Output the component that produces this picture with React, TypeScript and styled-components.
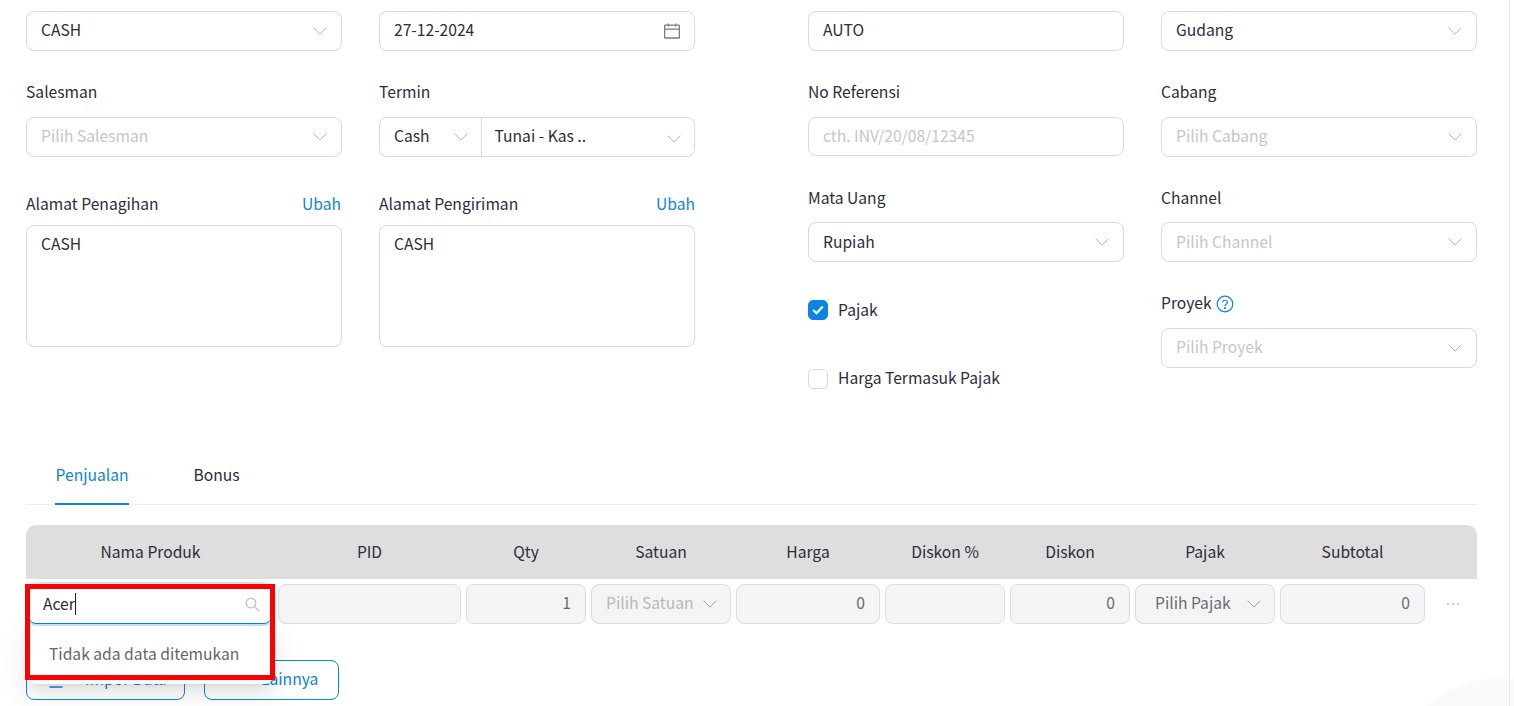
import React from "react";
import styled, { createGlobalStyle } from "styled-components";

const Global = createGlobalStyle`
  html, body { margin: 0; padding: 0; height: 706px; overflow: hidden; background: #fff; }
  body { font-family: "Noto Sans CJK SC", "Noto Sans", sans-serif; font-size: 15.65px; color: #2c2c3a; }
  * { box-sizing: border-box; }
`;

const Root = styled.div`
  position: relative;
  width: 1514px;
  height: 706px;
  overflow: hidden;
`;
const Page = styled.div`
  position: relative;
  width: 1510px;
  height: 706px;
  padding: 11px 32px 0 26px;
  border-right: 1px solid #e8e8e8;
`;
const Decor = styled.div`
  position: absolute;
  left: 1388px;
  top: 678px;
  width: 224px;
  height: 224px;
  border-radius: 50%;
  background: #fafafa;
`;
const FormArea = styled.div`
  display: flex;
  justify-content: space-between;
  height: 378px;
  position: relative;
`;
const Block = styled.div`
  display: flex;
  gap: 37px;
`;
const Column = styled.div`
  width: 316px;
  display: flex;
  flex-direction: column;
`;
const LabelRow = styled.div<{ $top: number; $bottom: number }>`
  display: flex;
  align-items: center;
  justify-content: space-between;
  height: 24px;
  line-height: 22px;
  margin-top: ${(p) => p.$top}px;
  margin-bottom: ${(p) => p.$bottom}px;
`;
const LabelGroup = styled.span`
  display: inline-flex;
  align-items: center;
  gap: 4px;
  svg { margin-top: 2px; }
`;
const LinkText = styled.a<{ $inset?: number }>`
  color: #0b84dd;
  margin-right: ${(p) => p.$inset ?? 0}px;
`;
const Control = styled.div<{ $muted?: boolean; $h?: number; $centered?: boolean }>`
  display: flex;
  align-items: center;
  justify-content: space-between;
  height: ${(p) => p.$h ?? 40}px;
  flex: none;
  padding: 0 14px ${(p) => (p.$centered ? 0 : 2)}px;
  background: #fff;
  border: 1px solid #d9d9d9;
  border-radius: 8px;
  color: ${(p) => (p.$muted ? "#c6c6c6" : "#2c2c3a")};
  line-height: 22px;
  svg { margin-top: ${(p) => (p.$centered ? 0 : 2)}px; }
`;
const TextArea = styled.div`
  height: 122px;
  padding: 6px 14px;
  border: 1px solid #d9d9d9;
  border-radius: 8px;
  line-height: 24px;
`;
const Split = styled.div`
  display: flex;
  height: 40px;
  border: 1px solid #d9d9d9;
  border-radius: 8px;
`;
const SplitPart = styled.div<{ $w?: number; $drop?: number }>`
  display: flex;
  align-items: center;
  justify-content: space-between;
  flex: ${(p) => (p.$w ? `0 0 ${p.$w}px` : "1")};
  padding: 0 13px 2px 14px;
  line-height: 22px;
  & + & { border-left: 1px solid #d9d9d9; padding-left: 12.5px; }
  svg { margin-top: ${(p) => p.$drop ?? 2}px; }
`;
const Check = styled.div<{ $top: number }>`
  display: flex;
  align-items: center;
  gap: 10px;
  margin-top: ${(p) => p.$top}px;
  height: 20px;
  line-height: 18px;
`;
const CheckText = styled.span<{ $lift: number }>`
  padding-bottom: ${(p) => p.$lift}px;
`;
const Box = styled.span<{ $on?: boolean }>`
  display: flex;
  align-items: center;
  justify-content: center;
  width: 20px;
  height: 20px;
  border-radius: 5px;
  border: 1px solid ${(p) => (p.$on ? "#0b84e3" : "#d9d9d9")};
  background: ${(p) => (p.$on ? "#0b84e3" : "#fff")};
`;
const Tabs = styled.div`
  display: flex;
  height: 59px;
  margin-top: 57px;
  padding-left: 29px;
  gap: 64px;
  border-bottom: 1px solid #ececec;
`;
const Tab = styled.div<{ $active?: boolean }>`
  height: 59px;
  line-height: 58px;
  padding: 0 0.5px;
  color: ${(p) => (p.$active ? "#0b84dd" : "#2c2c3a")};
  border-bottom: 2px solid ${(p) => (p.$active ? "#0b84e3" : "transparent")};
`;
const columns = "247px 183px 120px 140px 144px 120px 120px 140px 145px 1fr";
const HeaderRow = styled.div`
  display: grid;
  grid-template-columns: ${columns};
  column-gap: 5px;
  height: 54px;
  margin-top: 20px;
  align-items: center;
  background: #dedede;
  border-radius: 10px 10px 0 0;
`;
const HeaderCell = styled.div`
  text-align: center;
  line-height: 22px;
  &:first-child { padding-left: 2px; }
`;
const BodyRow = styled.div`
  display: grid;
  grid-template-columns: ${columns};
  column-gap: 5px;
  margin-top: 5px;
  height: 40px;
`;
const DisabledCell = styled.div<{ $right?: boolean; $muted?: boolean; $inset?: number }>`
  display: flex;
  align-items: center;
  justify-content: ${(p) => (p.$right ? "flex-end" : "space-between")};
  height: 40px;
  padding: 0 ${(p) => (p.$right ? 14 : 13)}px 2px ${(p) => p.$inset ?? 14}px;
  background: #f4f4f4;
  border: 1px solid #dcdcdc;
  border-radius: 8px;
  color: ${(p) => (p.$muted ? "#b8b8b8" : "#666c74")};
  line-height: 22px;
  svg { margin-top: 2px; }
`;
const ProductCell = styled.div`
  position: relative;
`;
const SearchBox = styled.div`
  position: absolute;
  left: 2px;
  right: 1px;
  top: 0;
  height: 40px;
  display: flex;
  align-items: center;
  justify-content: space-between;
  padding: 0 11px 0 14px;
  background: #fff;
  border: 1px solid #0b84e3;
  border-radius: 8px;
  box-shadow: 0 0 0 2px rgba(11, 132, 227, 0.2);
  line-height: 22px;
`;
const TypedText = styled.span`
  border-right: 1px solid #222;
  line-height: 22px;
  margin-right: auto;
`;
const Popup = styled.div`
  position: absolute;
  left: 2px;
  right: 1px;
  top: 42px;
  height: 58px;
  padding: 17px 21px 0;
  line-height: 22px;
  color: #666;
  background: #fff;
  border-radius: 8px;
  box-shadow: 0 6px 16px 0 rgba(0, 0, 0, 0.08), 0 3px 6px -4px rgba(0, 0, 0, 0.12), 0 9px 28px 8px rgba(0, 0, 0, 0.05);
  z-index: 2;
`;
const Highlight = styled.div`
  position: absolute;
  left: -1px;
  top: 0;
  width: 250px;
  height: 96px;
  border: 5px solid #ff0000;
  z-index: 3;
`;
const MoreCell = styled.div`
  display: flex;
  align-items: center;
  justify-content: center;
  padding-right: 2px;
  height: 40px;
`;
const Actions = styled.div`
  display: flex;
  gap: 19px;
  margin-top: 36px;
`;
const ActionButton = styled.div<{ $w: number; $pad: number; $gap: number }>`
  display: flex;
  align-items: center;
  gap: ${(p) => p.$gap}px;
  width: ${(p) => p.$w}px;
  height: 40px;
  padding: 0 0 2px ${(p) => p.$pad}px;
  border: 1px solid #0b84e3;
  border-radius: 8px;
  color: #0b84dd;
  line-height: 22px;
  white-space: nowrap;
  svg { flex: none; margin-top: 3px; }
`;

const Chevron = ({ color = "#b8b8b8" }: { color?: string }) => (
  <svg width="14" height="8" viewBox="0 0 14 8" fill="none">
    <path d="M0.7 0.6 L7 7.2 L13.3 0.6" stroke={color} strokeWidth="1" />
  </svg>
);
const Calendar = () => (
  <svg width="16" height="16" viewBox="0 0 16 16" fill="none" stroke="#7c7c7c" strokeWidth="1.3">
    <rect x="0.65" y="2.2" width="14.7" height="12.8" rx="0.6" />
    <path d="M0.6 6.2 H15.4 M4.2 0.5 V3.6 M11.8 0.5 V3.6" />
  </svg>
);
const Tick = () => (
  <svg width="12" height="10" viewBox="0 0 12 10" fill="none">
    <path d="M1.2 5 L4.5 8.2 L10.8 1.6" stroke="#fff" strokeWidth="2.2" />
  </svg>
);
const Help = () => (
  <svg width="18" height="18" viewBox="0 0 18 18" fill="none" stroke="#0b84e3" strokeWidth="1.2">
    <circle cx="9" cy="9" r="7.8" />
    <path d="M6.6 7.2 C6.6 4.6 11.4 4.6 11.4 7.2 C11.4 9 9 8.9 9 10.9" />
    <circle cx="9" cy="13" r="0.5" />
  </svg>
);
const Search = () => (
  <svg width="15" height="15" viewBox="0 0 15 15" fill="none" stroke="#bdbdbd" strokeWidth="1.2">
    <circle cx="6" cy="6" r="4.8" />
    <path d="M9.6 9.6 L14 14" />
  </svg>
);
const Dots = ({ color, r }: { color: string; r: number }) => (
  <svg width="14" height="4" viewBox="0 0 14 4" fill={color}>
    <circle cx="2" cy="2" r={r} />
    <circle cx="7" cy="2" r={r} />
    <circle cx="12" cy="2" r={r} />
  </svg>
);
const Upload = () => (
  <svg width="14" height="14" viewBox="0 0 14 14" fill="none" stroke="#0b84e3" strokeWidth="1.5">
    <path d="M7 0 V10 M0.5 13 H13.5" />
  </svg>
);

const headers = ["Nama Produk", "PID", "Qty", "Satuan", "Harga", "Diskon %", "Diskon", "Pajak", "Subtotal"];

export default function App() {
  return (
    <Root>
      <Global />
      <Decor />
      <Page>
        <FormArea>
          <Block>
            <Column>
              <Control>CASH<Chevron /></Control>
              <LabelRow $top={29} $bottom={13}>Salesman</LabelRow>
              <Control $muted>Pilih Salesman<Chevron /></Control>
              <LabelRow $top={35} $bottom={9}>Alamat Penagihan<LinkText $inset={1}>Ubah</LinkText></LabelRow>
              <TextArea>CASH</TextArea>
            </Column>
            <Column>
              <Control>27-12-2024<Calendar /></Control>
              <LabelRow $top={29} $bottom={13}>Termin</LabelRow>
              <Split>
                <SplitPart $w={101}>Cash<Chevron /></SplitPart>
                <SplitPart $drop={6}>Tunai - Kas ..<Chevron /></SplitPart>
              </Split>
              <LabelRow $top={35} $bottom={9}>Alamat Pengiriman<LinkText>Ubah</LinkText></LabelRow>
              <TextArea>CASH</TextArea>
            </Column>
          </Block>
          <Block>
            <Column>
              <Control>AUTO</Control>
              <LabelRow $top={29} $bottom={13}>No Referensi</LabelRow>
              <Control $muted $h={39}>cth. INV/20/08/12345</Control>
              <LabelRow $top={30} $bottom={12}>Mata Uang</LabelRow>
              <Control $centered>Rupiah<Chevron /></Control>
              <Check $top={38}><Box $on><Tick /></Box><CheckText $lift={0}>Pajak</CheckText></Check>
              <Check $top={49}><Box /><CheckText $lift={2}>Harga Termasuk Pajak</CheckText></Check>
            </Column>
            <Column>
              <Control>Gudang<Chevron /></Control>
              <LabelRow $top={29} $bottom={13}>Cabang</LabelRow>
              <Control $muted>Pilih Cabang<Chevron /></Control>
              <LabelRow $top={29} $bottom={12}>Channel</LabelRow>
              <Control $muted $centered>Pilih Channel<Chevron /></Control>
              <LabelRow $top={29} $bottom={13}><LabelGroup>Proyek<Help /></LabelGroup></LabelRow>
              <Control $muted>Pilih Proyek<Chevron /></Control>
            </Column>
          </Block>
        </FormArea>
        <Tabs>
          <Tab $active>Penjualan</Tab>
          <Tab>Bonus</Tab>
        </Tabs>
        <HeaderRow>
          {headers.map((h) => (
            <HeaderCell key={h}>{h}</HeaderCell>
          ))}
        </HeaderRow>
        <BodyRow>
          <ProductCell>
            <SearchBox>
              <TypedText>Acer</TypedText>
              <Search />
            </SearchBox>
            <Popup>Tidak ada data ditemukan</Popup>
            <Highlight />
          </ProductCell>
          <DisabledCell />
          <DisabledCell $right>1</DisabledCell>
          <DisabledCell $muted>Pilih Satuan<Chevron color="#a6a6a6" /></DisabledCell>
          <DisabledCell $right>0</DisabledCell>
          <DisabledCell />
          <DisabledCell $right>0</DisabledCell>
          <DisabledCell $inset={19}>Pilih Pajak<Chevron color="#a0a0a0" /></DisabledCell>
          <DisabledCell $right>0</DisabledCell>
          <MoreCell><Dots color="#c4c4c4" r={1.1} /></MoreCell>
        </BodyRow>
        <Actions>
          <ActionButton $w={159} $pad={22} $gap={22}><Upload />Impor Data</ActionButton>
          <ActionButton $w={135} $pad={20} $gap={22}><Dots color="#0b84e3" r={1.6} />Lainnya</ActionButton>
        </Actions>
      </Page>
    </Root>
  );
}
